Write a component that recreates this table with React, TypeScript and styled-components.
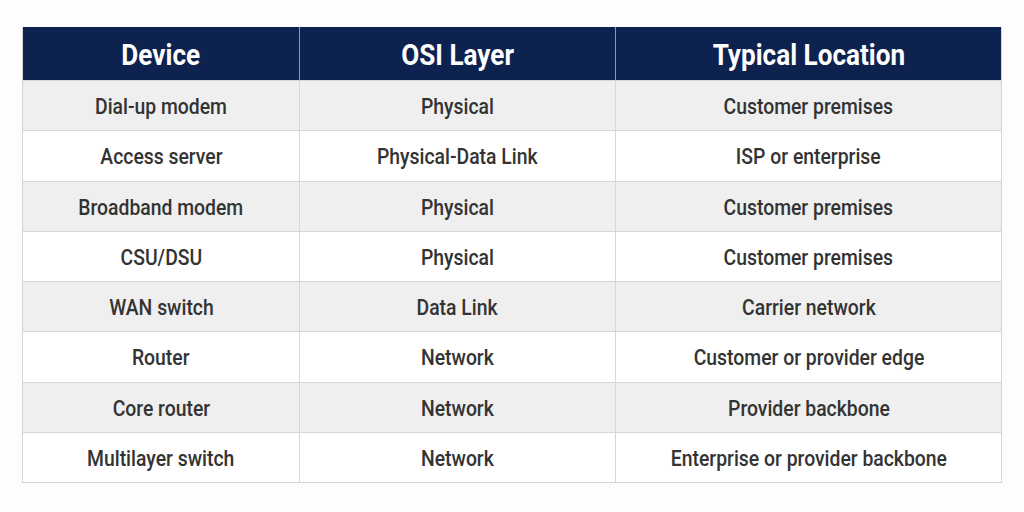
import React from "react";
import styled, { createGlobalStyle } from "styled-components";

const Global = createGlobalStyle`
  html, body { margin: 0; padding: 0; background: #fdfdfd; }
  body { font-family: Roboto, "Noto Sans", sans-serif; }
`;

const Page = styled.div`
  width: 1024px;
  height: 512px;
  box-sizing: border-box;
  padding: 27px 22px 0 22px;
`;

const Table = styled.div`
  display: grid;
  grid-template-columns: 277px 316px 385px;
  border: 1px solid #d3d3d3;
  border-top: none;
  width: 980px;
  box-sizing: border-box;
`;

const HeadCell = styled.div<{ $last?: boolean }>`
  height: 53px;
  background: #0e2250;
  color: #ffffff;
  font-weight: 700;
  font-size: 29px;
  display: flex;
  align-items: center;
  justify-content: center;
  border-right: ${(p) => (p.$last ? "none" : "1px solid #8a97b3")};
`;

const Cell = styled.div<{ $alt: boolean; $last?: boolean }>`
  height: 49.25px;
  background: ${(p) => (p.$alt ? "#efefef" : "#ffffff")};
  color: #333333;
  font-weight: 500;
  font-size: 22px;
  display: flex;
  align-items: center;
  justify-content: center;
  border-top: 1px solid #d6d6d6;
  border-right: ${(p) => (p.$last ? "none" : "1px solid #d6d6d6")};
`;

const Text = styled.span<{ $scale: number }>`
  display: inline-block;
  white-space: nowrap;
  transform: scaleX(${(p) => p.$scale});
  transform-origin: center;
  padding-top: 2px;
`;

const rows: [string, string, string][] = [
  ["Dial-up modem", "Physical", "Customer premises"],
  ["Access server", "Physical-Data Link", "ISP or enterprise"],
  ["Broadband modem", "Physical", "Customer premises"],
  ["CSU/DSU", "Physical", "Customer premises"],
  ["WAN switch", "Data Link", "Carrier network"],
  ["Router", "Network", "Customer or provider edge"],
  ["Core router", "Network", "Provider backbone"],
  ["Multilayer switch", "Network", "Enterprise or provider backbone"],
];

export default function App() {
  return (
    <Page>
      <Global />
      <Table>
        <HeadCell><Text $scale={0.9}>Device</Text></HeadCell>
        <HeadCell><Text $scale={0.9}>OSI Layer</Text></HeadCell>
        <HeadCell $last><Text $scale={0.9}>Typical Location</Text></HeadCell>
        {rows.map((r, i) =>
          r.map((c, j) => (
            <Cell key={`${i}-${j}`} $alt={i % 2 === 0} $last={j === 2}>
              <Text $scale={0.88}>{c}</Text>
            </Cell>
          ))
        )}
      </Table>
    </Page>
  );
}
